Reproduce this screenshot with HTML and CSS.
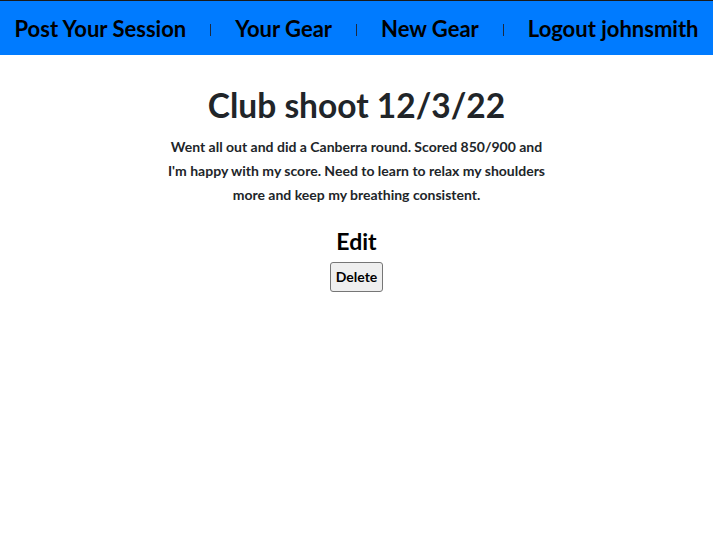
FILE: index.html
```html
<!DOCTYPE html>
<html lang="en">
<head>
<meta charset="utf-8">
<title>Session</title>
<link rel="stylesheet" href="styles.css">
</head>
<body>
<nav class="navbar">
  <a class="nav-link" href="#">Post Your Session</a>
  <span class="sep"></span>
  <a class="nav-link" href="#">Your Gear</a>
  <span class="sep"></span>
  <a class="nav-link" href="#">New Gear</a>
  <span class="sep"></span>
  <a class="nav-link" href="#">Logout johnsmith</a>
</nav>
<main class="session">
  <h1 class="title">Club shoot 12/3/22</h1>
  <p class="notes">Went all out and did a Canberra round. Scored 850/900 and I'm happy with my score. Need to learn to relax my shoulders more and keep my breathing consistent.</p>
  <a class="edit" href="#">Edit</a>
  <form class="delete-form"><button class="delete-btn" type="button">Delete</button></form>
</main>
</body>
</html>
```
FILE: styles.css
```css
body {
  margin: 0;
  font-family: Lato, "Open Sans", sans-serif;
  color: #212529;
  background: #fff;
}
.navbar {
  display: flex;
  align-items: center;
  justify-content: center;
  gap: 24px;
  height: 54px;
  background: #007bff;
  border-top: 1px solid #1a1a1a;
}
.nav-link {
  color: #000;
  text-decoration: none;
  font-weight: 700;
  font-size: 22px;
}
.sep {
  width: 1px;
  height: 12px;
  background: #1b2a40;
  margin-top: 3px;
}
.session {
  display: flex;
  flex-direction: column;
  align-items: center;
  text-align: center;
}
.title {
  margin: 27px 0 0;
  font-size: 33.5px;
  font-weight: 700;
  line-height: 46px;
}
.notes {
  width: 380px;
  margin: 7px 0 0;
  font-size: 14px;
  font-weight: 700;
  line-height: 24px;
}
.edit {
  margin-top: 20px;
  color: #000;
  text-decoration: none;
  font-weight: 700;
  font-size: 23px;
  line-height: 28px;
}
.delete-form {
  margin-top: 7px;
}
.delete-btn {
  font-family: Lato, sans-serif;
  font-weight: 700;
  font-size: 14px;
  line-height: 17px;
  color: #000;
  padding: 5px 5px 6px;
  background: #efefef;
  border: 1px solid #767676;
  border-radius: 3px;
}
```
